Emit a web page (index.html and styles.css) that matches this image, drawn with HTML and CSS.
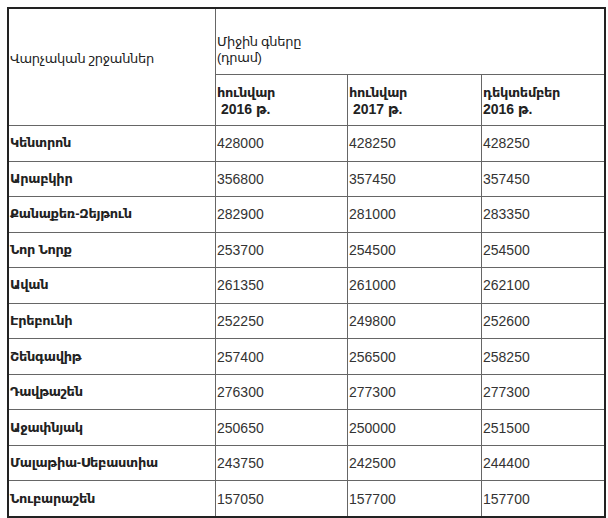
FILE: index.html
```html
<!DOCTYPE html>
<html lang="hy">
<head>
<meta charset="utf-8">
<title>Միջին գները</title>
<link rel="stylesheet" href="styles.css">
</head>
<body>
<div class="wrap">
<table class="prices">
  <colgroup>
    <col class="w1"><col class="w2"><col class="w3"><col class="w4">
  </colgroup>
  <tr class="hrow1">
    <th rowspan="2" class="nl nt head-a hy">Վարչական շրջաններ</th>
    <th colspan="3" class="nt head-b hy">Միջին գները<br>(դրամ)</th>
  </tr>
  <tr class="hrow2">
    <th class="sub"><span class="hy">հունվար</span><br>&nbsp;2016 թ.</th>
    <th class="sub"><span class="hy">հունվար</span><br>&nbsp;2017 թ.</th>
    <th class="sub"><span class="hy">դեկտեմբեր</span><br>2016 թ.</th>
  </tr>
  <tr><td class="nl name hy">Կենտրոն</td><td>428000</td><td>428250</td><td>428250</td></tr>
  <tr><td class="nl name hy">Արաբկիր</td><td>356800</td><td>357450</td><td>357450</td></tr>
  <tr><td class="nl name hy">Քանաքեռ-Զեյթուն</td><td>282900</td><td>281000</td><td>283350</td></tr>
  <tr><td class="nl name hy">Նոր Նորք</td><td>253700</td><td>254500</td><td>254500</td></tr>
  <tr><td class="nl name hy">Ավան</td><td>261350</td><td>261000</td><td>262100</td></tr>
  <tr><td class="nl name hy">Էրեբունի</td><td>252250</td><td>249800</td><td>252600</td></tr>
  <tr><td class="nl name hy">Շենգավիթ</td><td>257400</td><td>256500</td><td>258250</td></tr>
  <tr><td class="nl name hy">Դավթաշեն</td><td>276300</td><td>277300</td><td>277300</td></tr>
  <tr><td class="nl name hy">Աջափնյակ</td><td>250650</td><td>250000</td><td>251500</td></tr>
  <tr><td class="nl name hy">Մալաթիա-Սեբաստիա</td><td>243750</td><td>242500</td><td>244400</td></tr>
  <tr><td class="nl name hy">Նուբարաշեն</td><td>157050</td><td>157700</td><td>157700</td></tr>
</table>
</div>
</body>
</html>
```

FILE: styles.css
```css
html, body {
  margin: 0;
  background: #fff;
}
.wrap {
  padding: 7px 0 0 7px;
}
.prices {
  width: 599px;
  table-layout: fixed;
  border-spacing: 0;
  border: 2px solid #222;
  font-family: "Liberation Sans", "DejaVu Sans", Arial, sans-serif;
  font-size: 14px;
  line-height: 16px;
  color: #333;
}
.w1 { width: 206px; }
.w2 { width: 132px; }
.w3 { width: 134px; }
.w4 { width: 123px; }
.prices th,
.prices td {
  border-top: 1px solid #666;
  border-left: 1px solid #666;
  padding: 0 0 0 1px;
  text-align: left;
}
.prices .nl { border-left: 0; }
.prices .nt { border-top: 0; }
.prices th {
  font-weight: normal;
  color: #222;
  vertical-align: top;
}
.prices .hy {
  font-size: 13px;
  letter-spacing: -0.3px;
}
.hrow1 { height: 65px; }
.hrow2 { height: 51px; }
.prices .head-a { padding-top: 42px; }
.prices .head-b { padding-top: 25px; }
.prices .sub {
  font-weight: bold;
  padding-top: 9px;
}
.prices td {
  height: 34.55px;
  vertical-align: middle;
}
.prices .name {
  font-weight: bold;
  color: #222;
}
```
